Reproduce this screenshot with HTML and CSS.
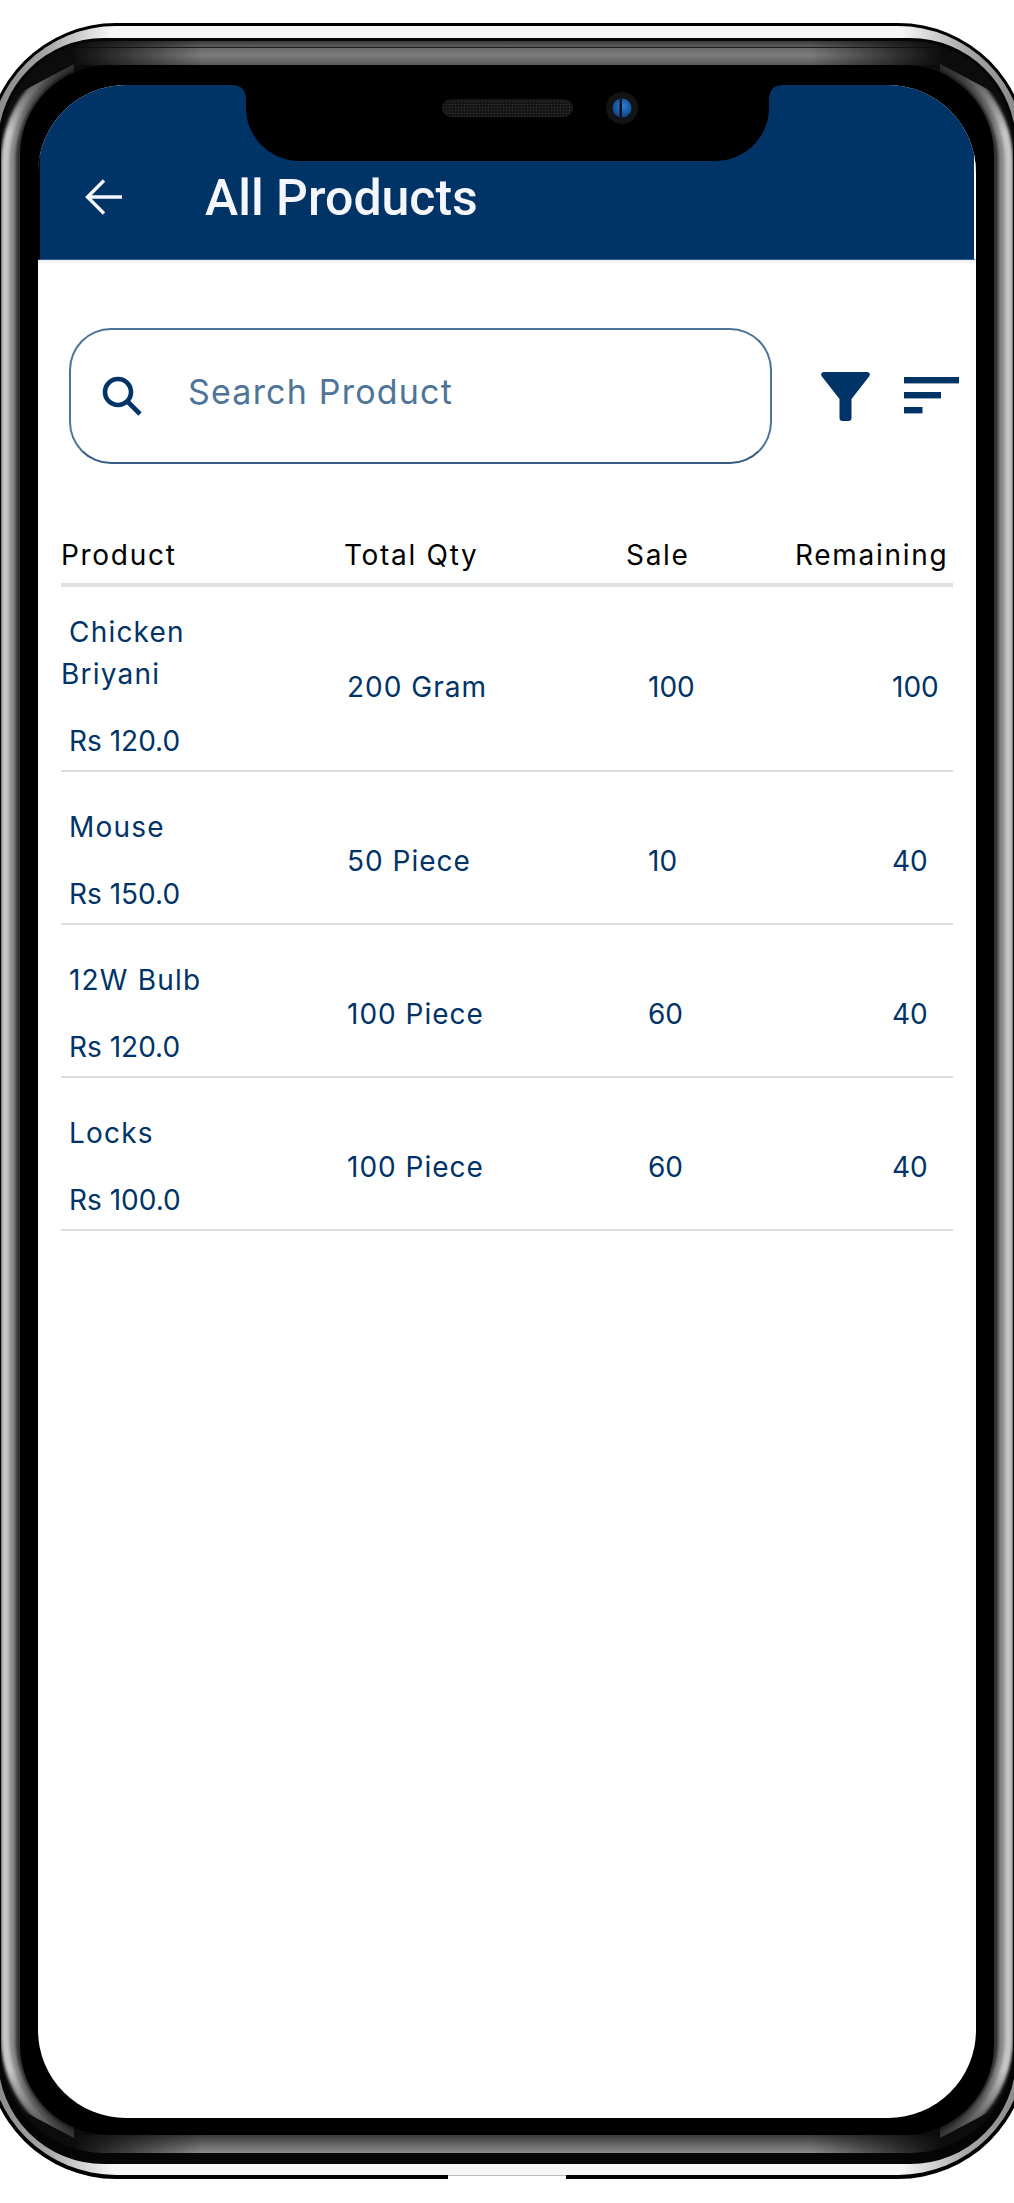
FILE: index.html
```html
<!DOCTYPE html>
<html lang="en">
<head>
<meta charset="utf-8">
<title>All Products</title>
<link rel="stylesheet" href="styles.css">
</head>
<body>
<div class="device">
  <svg class="frame" viewBox="0 0 1014 2203" width="1014" height="2203" aria-hidden="true">
    <defs>
      <linearGradient id="fadeH" x1="0" x2="1014" y1="0" y2="0" gradientUnits="userSpaceOnUse">
        <stop offset="0.07" stop-color="#000"/>
        <stop offset="0.2" stop-color="#fff"/>
        <stop offset="0.8" stop-color="#fff"/>
        <stop offset="0.93" stop-color="#000"/>
      </linearGradient>
      <mask id="fade" maskUnits="userSpaceOnUse" x="0" y="0" width="1014" height="2203">
        <rect width="1014" height="2203" fill="url(#fadeH)"/>
      </mask>
      <linearGradient id="fadeV" x1="0" x2="0" y1="60" y2="2143" gradientUnits="userSpaceOnUse">
        <stop offset="0" stop-color="#333"/>
        <stop offset="0.035" stop-color="#fff"/>
        <stop offset="0.965" stop-color="#fff"/>
        <stop offset="1" stop-color="#333"/>
      </linearGradient>
      <mask id="fadeSides" maskUnits="userSpaceOnUse" x="0" y="0" width="1014" height="2203">
        <rect width="1014" height="2203" fill="url(#fadeV)"/>
      </mask>
      <linearGradient id="silver" x1="0" x2="1014" y1="0" y2="0" gradientUnits="userSpaceOnUse">
        <stop offset="0" stop-color="#8c8c8c"/>
        <stop offset="0.045" stop-color="#a6a6a6"/>
        <stop offset="0.11" stop-color="#f6f6f6"/>
        <stop offset="0.89" stop-color="#f6f6f6"/>
        <stop offset="0.955" stop-color="#a6a6a6"/>
        <stop offset="1" stop-color="#8c8c8c"/>
      </linearGradient>
      <linearGradient id="topBand" x1="0" x2="0" y1="41" y2="65" gradientUnits="userSpaceOnUse">
        <stop offset="0" stop-color="#3c3c3c"/>
        <stop offset="0.25" stop-color="#5e5e5e"/>
        <stop offset="0.27" stop-color="#1c1c1c"/>
        <stop offset="0.31" stop-color="#6a6a6a"/>
        <stop offset="0.6" stop-color="#7c7c7c"/>
        <stop offset="1" stop-color="#5a5a5a"/>
      </linearGradient>
      <linearGradient id="bottomBand" x1="0" x2="0" y1="2135" y2="2153" gradientUnits="userSpaceOnUse">
        <stop offset="0" stop-color="#3a3a3a"/>
        <stop offset="1" stop-color="#8c8c8c"/>
      </linearGradient>
      <clipPath id="ring"><rect x="1" y="41" width="1012" height="2112" rx="103"/></clipPath>
      <clipPath id="sides">
        <polygon points="74,64 -2,104 -2,2098 74,2138"/>
        <polygon points="940,64 1016,104 1016,2098 940,2138"/>
      </clipPath>
      <filter id="soft" x="-5%" y="-5%" width="110%" height="110%"><feGaussianBlur stdDeviation="1.6"/></filter>
    </defs>
    <rect x="-14" y="23" width="1042" height="2156" rx="130" fill="#000"/>
    <rect x="-11" y="26" width="1036" height="2149" rx="127" fill="url(#silver)"/>
    <rect x="448" y="2175" width="118" height="4" fill="#fff"/>
    <rect x="448" y="2175" width="118" height="1" fill="#bbb"/>
    <rect x="-2" y="38" width="1018" height="2126" rx="106" fill="#050505"/>
    <g clip-path="url(#ring)">
      <rect x="0" y="41" width="1014" height="2112" fill="#0c0c0c"/>
      <g mask="url(#fade)">
        <rect x="0" y="41" width="1014" height="24" fill="url(#topBand)"/>
        <rect x="0" y="2135" width="1014" height="18" fill="url(#bottomBand)"/>
      </g>
      <g clip-path="url(#sides)">
        <g mask="url(#fadeSides)">
          <g filter="url(#soft)" fill="none">
            <rect x="14" y="59" width="986" height="2082" rx="100" stroke="#333" stroke-width="16"/>
            <rect x="10" y="55" width="994" height="2090" rx="105" stroke="#8a8a8a" stroke-width="10"/>
            <rect x="5" y="50" width="1004" height="2100" rx="112" stroke="#c6c6c6" stroke-width="8"/>
          </g>
        </g>
      </g>
    </g>
    <rect x="20" y="65" width="974" height="2070" rx="90" fill="#000"/>
  </svg>

  <div class="screen">
    <header class="appbar">
      <svg class="back" viewBox="0 0 38 36" width="38" height="36" aria-hidden="true">
        <path d="M37 18H3M19 1.500 2.500 18 19 34.500" fill="none" stroke="#f4f6fb" stroke-width="3.4"/>
      </svg>
      <h1 class="title">All Products</h1>
    </header>

    <div class="toolbar">
      <div class="search">
        <svg class="search-icon" viewBox="0 0 40 40" width="40" height="40" aria-hidden="true">
          <circle cx="16" cy="16" r="13" fill="none" stroke="#003366" stroke-width="4.6"/>
          <path d="M25.500 25.500 38 38" fill="none" stroke="#003366" stroke-width="4.6"/>
        </svg>
        <span class="placeholder">Search Product</span>
      </div>
      <svg class="filter" viewBox="0 0 49 49" width="49" height="49" aria-hidden="true">
        <path d="M3 0H46C48.500 0 49.600 2.400 48.300 4.200L30.500 27V46C30.500 47.700 29.200 49 27.500 49H21.500C19.800 49 18.500 47.700 18.500 46V27L.7 4.200C-.6 2.400.5 0 3 0Z" fill="#003366"/>
      </svg>
      <svg class="sort" viewBox="0 0 55 37" width="55" height="37" aria-hidden="true">
        <rect width="55" height="6.400" fill="#003366"/>
        <rect y="15" width="37" height="6.400" fill="#003366"/>
        <rect y="30" width="18.500" height="6.400" fill="#003366"/>
      </svg>
    </div>

    <section class="table">
      <div class="thead">
        <span>Product</span>
        <span>Total Qty</span>
        <span>Sale</span>
        <span>Remaining</span>
      </div>
      <div class="row row-first">
        <div class="product"><div class="name">Chicken Briyani</div><div class="price">Rs 120.0</div></div>
        <div class="qty">200 Gram</div>
        <div class="sale">100</div>
        <div class="rem">100</div>
      </div>
      <div class="row">
        <div class="product"><div class="name">Mouse</div><div class="price">Rs 150.0</div></div>
        <div class="qty">50 Piece</div>
        <div class="sale">10</div>
        <div class="rem">40</div>
      </div>
      <div class="row">
        <div class="product"><div class="name">12W Bulb</div><div class="price">Rs 120.0</div></div>
        <div class="qty">100 Piece</div>
        <div class="sale">60</div>
        <div class="rem">40</div>
      </div>
      <div class="row">
        <div class="product"><div class="name">Locks</div><div class="price">Rs 100.0</div></div>
        <div class="qty">100 Piece</div>
        <div class="sale">60</div>
        <div class="rem">40</div>
      </div>
    </section>
  </div>

  <svg class="notch" viewBox="0 0 552 78" width="552" height="78" aria-hidden="true">
    <defs>
      <pattern id="mesh" width="3" height="3" patternUnits="userSpaceOnUse">
        <rect width="3" height="3" fill="#141414"/>
        <circle cx="1.500" cy="1.500" r="0.8" fill="#303030"/>
      </pattern>
      <radialGradient id="lens" cx="0.55" cy="0.4" r="0.7">
        <stop offset="0" stop-color="#2f7fd6"/>
        <stop offset="1" stop-color="#0b3a78"/>
      </radialGradient>
    </defs>
    <path d="M0 0C9 0 14 5 14 15V23C14 52 38 76 68 76H483C513 76 537 52 537 23V15C537 5 542 0 551 0Z" fill="#000"/>
    <rect x="210" y="14" width="131" height="18" rx="9" fill="url(#mesh)"/>
    <circle cx="390" cy="23" r="16" fill="#111315"/>
    <circle cx="390" cy="23" r="9.500" fill="url(#lens)"/>
    <rect x="387.500" y="14" width="2.500" height="18" fill="#06121f"/>
  </svg>
</div>
</body>
</html>
```

FILE: styles.css
```css
* {
  box-sizing: border-box;
}

html,
body {
  margin: 0;
  padding: 0;
  background: #fff;
}

.device {
  position: relative;
  width: 1014px;
  height: 2203px;
  padding: 85px 38px;
  overflow: hidden;
  font-family: "Inter", "Liberation Sans", sans-serif;
}

.frame {
  position: absolute;
  left: 0;
  top: 0;
}

.notch {
  position: absolute;
  left: 232px;
  top: 85px;
  z-index: 2;
}

.screen {
  position: relative;
  z-index: 1;
  height: 2033px;
  border-radius: 88px;
  overflow: hidden;
  background: #fff;
}

.appbar {
  display: flex;
  align-items: center;
  height: 175px;
  padding: 50px 0 0 45px;
  gap: 82px;
  background: #003366;
  border-left: 2px solid #000;
  border-right: 2px solid #fff;
  border-bottom: 1px solid #2c5c8e;
  box-shadow: 0 2px 4px rgba(0, 0, 0, 0.08);
}

.title {
  margin: 2px 0 0;
  font-family: "Roboto", "Liberation Sans", sans-serif;
  font-size: 50px;
  font-weight: 500;
  line-height: 56px;
  color: #f4f6fb;
}

.toolbar {
  display: flex;
  align-items: center;
  margin-top: 68px;
  padding-left: 31px;
}

.search {
  display: flex;
  align-items: center;
  width: 703px;
  height: 136px;
  padding-left: 31px;
  gap: 46px;
  border: 2.5px solid #4f7499;
  border-bottom-color: #375c85;
  border-radius: 42px;
}

.placeholder {
  font-size: 34px;
  letter-spacing: 1.2px;
  line-height: 44px;
  color: #4f7499;
  margin-top: -8px;
}

.filter {
  margin-left: 49px;
}

.sort {
  margin-left: 34px;
  margin-bottom: 1px;
}

.table {
  width: 892px;
  margin: 70px 0 0 23px;
  font-size: 28px;
  line-height: 42px;
}

.thead,
.row {
  display: grid;
  grid-template-columns: 283px 282px 169px 158px;
}

.thead {
  padding-bottom: 7px;
  border-bottom: 4px solid #e0e0e0;
  letter-spacing: 1.7px;
  color: #000;
}

.row {
  align-items: center;
  padding: 34px 0 8px;
  border-bottom: 2px solid #dddddd;
  color: #003366;
}

.row-first {
  padding-top: 24px;
}

.name {
  width: 170px;
  text-indent: 8px;
  letter-spacing: 1.2px;
}

.price {
  margin-top: 25px;
  padding-left: 8px;
}

.qty {
  padding-left: 3px;
  letter-spacing: 1px;
}

.sale {
  padding-left: 22px;
}

.rem {
  padding-left: 97px;
}
```
